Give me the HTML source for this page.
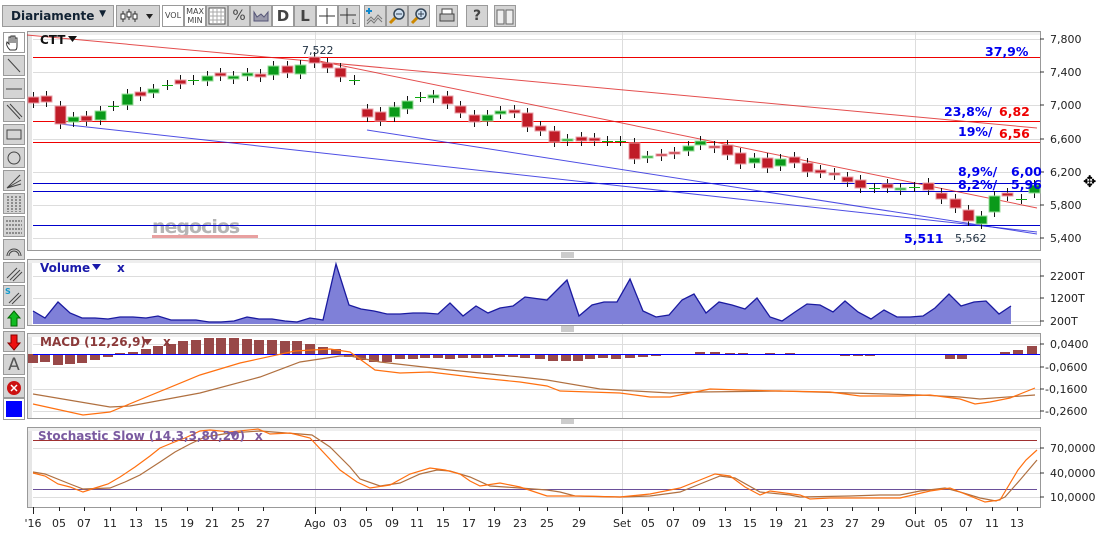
<!DOCTYPE html>
<html><head><meta charset="utf-8"><style>
*{margin:0;padding:0;box-sizing:border-box}
body{width:1097px;height:540px;background:#fff;overflow:hidden;position:relative;font-family:"DejaVu Sans","Liberation Sans",sans-serif}
.b{position:absolute;top:5px;height:22px;background:#d4d4d4;border:1px solid #9a9a9a;font-size:11px;color:#444;text-align:center}
.w{background:#fff}
.t{position:absolute;left:3px;width:22px;height:21px;background:#d4d4d4;border:1px solid #9a9a9a}
</style></head><body>
<div class="b" style="left:2px;width:112px;text-align:left;padding:3px 8px;font-weight:bold;color:#123;font-size:12px;font-family:'DejaVu Sans',sans-serif">Diariamente<span style="position:absolute;right:7px;top:3px;font-size:9px">▼</span></div>
<div class="b" style="left:116px;width:44px"><svg width="42" height="20"><g stroke="#333" fill="#fff"><line x1="6" y1="5" x2="6" y2="16"/><rect x="4" y="8" width="4" height="5"/><line x1="12" y1="3" x2="12" y2="14"/><rect x="10" y="6" width="4" height="5"/><line x1="18" y1="5" x2="18" y2="16"/><rect x="16" y="8" width="4" height="5"/></g><path d="M29 8h7l-3.5 5z" fill="#222"/></svg></div>
<div class="b w" style="left:162px;width:22px;font-size:8px;line-height:20px">VOL</div>
<div class="b w" style="left:184px;width:22px;font-size:8px;line-height:9px;padding-top:1px">MAX<br>MIN</div>
<div class="b" style="left:206px;width:22px"><svg width="20" height="20"><rect x="2" y="2" width="16" height="16" fill="#fff" stroke="#555"/><path d="M6 2v16M10 2v16M14 2v16M2 6h16M2 10h16M2 14h16" stroke="#aaa"/></svg></div>
<div class="b" style="left:228px;width:22px;font-size:14px;line-height:20px">%</div>
<div class="b" style="left:250px;width:22px"><svg width="20" height="20"><path d="M3 15V6l3 5 4-3 3 3 4-5v9z" fill="#99a" stroke="#557"/></svg></div>
<div class="b w" style="left:272px;width:22px;font-size:15px;font-weight:bold;line-height:20px">D</div>
<div class="b" style="left:294px;width:22px;font-size:15px;font-weight:bold;line-height:20px">L</div>
<div class="b w" style="left:316px;width:22px"><svg width="20" height="20"><path d="M10 2v16M2 10h16" stroke="#333"/></svg></div>
<div class="b" style="left:338px;width:22px"><svg width="20" height="20"><path d="M8 2v16M1 9h16" stroke="#333"/><text x="13" y="18" font-size="7" fill="#333">L</text></svg></div>
<div class="b" style="left:364px;width:22px"><svg width="20" height="20"><path d="M2 15l4-4 3 3 4-5 4 4M2 18l4-4 3 3 4-5 4 4" stroke="#777" fill="none"/><path d="M4 2v6M1 5h6" stroke="#18c" stroke-width="2"/></svg></div>
<div class="b" style="left:386px;width:22px"><svg width="20" height="20"><circle cx="12" cy="8" r="5" fill="#cde" stroke="#345" stroke-width="1.5"/><path d="M9 8h6" stroke="#345"/><path d="M8 12l-5 5" stroke="#c80" stroke-width="3"/></svg></div>
<div class="b" style="left:408px;width:22px"><svg width="20" height="20"><circle cx="12" cy="8" r="5" fill="#cde" stroke="#345" stroke-width="1.5"/><path d="M9 8h6M12 5v6" stroke="#345"/><path d="M8 12l-5 5" stroke="#c80" stroke-width="3"/></svg></div>
<div class="b" style="left:436px;width:22px"><svg width="20" height="20"><rect x="5" y="3" width="10" height="5" fill="#fff" stroke="#444"/><rect x="3" y="8" width="14" height="7" fill="#bbb" stroke="#444"/></svg></div>
<div class="b" style="left:466px;width:22px;font-size:14px;font-weight:bold;line-height:20px">?</div>
<div class="b" style="left:494px;width:22px"><svg width="20" height="20"><path d="M2 4h7v14H2zM11 4h7v14h-7z" fill="#eee" stroke="#666"/></svg></div>

<!-- left tools -->
<div class="t w" style="top:32px;background:#fff"><svg width="20" height="19"><path d="M6 17c-3-3-4-6-3-8l2 2V4h2v6V3h2v7V3h2v7V5h2v8c0 3-1 4-2 4z" fill="#fff" stroke="#333"/></svg></div>
<div class="t" style="top:55px"><svg width="20" height="19"><path d="M4 3l12 13" stroke="#444"/></svg></div>
<div class="t" style="top:78px"><svg width="20" height="19"><path d="M2 10h16" stroke="#444"/></svg></div>
<div class="t" style="top:101px"><svg width="20" height="19"><path d="M3 3l13 14M6 2l12 13" stroke="#444"/></svg></div>
<div class="t" style="top:124px"><svg width="20" height="19"><rect x="3" y="5" width="14" height="9" fill="none" stroke="#444"/></svg></div>
<div class="t" style="top:147px"><svg width="20" height="19"><circle cx="10" cy="10" r="6" fill="none" stroke="#444"/></svg></div>
<div class="t" style="top:170px"><svg width="20" height="19"><path d="M3 17L16 4M3 17l14-8M3 17l14-4" stroke="#444"/></svg></div>
<div class="t" style="top:193px"><svg width="20" height="19"><path d="M4 2v16M8 2v16M12 2v16M16 2v16" stroke="#444" stroke-dasharray="2 1"/></svg></div>
<div class="t" style="top:216px"><svg width="20" height="19"><path d="M2 4h16M2 8h16M2 12h16M2 16h16" stroke="#444" stroke-dasharray="2 1"/></svg></div>
<div class="t" style="top:239px"><svg width="20" height="19"><path d="M3 16a7 7 0 0 1 14 0M5 16a5 5 0 0 1 10 0" stroke="#444" fill="none"/></svg></div>
<div class="t" style="top:262px"><svg width="20" height="19"><path d="M3 15L13 5M6 17L16 7M9 18L18 9" stroke="#444"/></svg></div>
<div class="t" style="top:285px"><svg width="20" height="19"><text x="1" y="8" font-size="8" font-weight="bold" fill="#19c">S</text><path d="M5 17L15 7M8 18L17 9" stroke="#444"/></svg></div>
<div class="t" style="top:308px"><svg width="20" height="19"><path d="M10 2l6 7h-3v8H7V9H4z" fill="#1b2" stroke="#060"/></svg></div>
<div class="t" style="top:331px"><svg width="20" height="19"><path d="M10 18l6-7h-3V3H7v8H4z" fill="#e11" stroke="#800"/></svg></div>
<div class="t" style="top:354px;font-size:17px;color:#555;text-align:center">A</div>
<div class="t" style="top:377px"><svg width="20" height="19"><circle cx="10" cy="10" r="7" fill="#c11"/><path d="M7 7l6 6M13 7l-6 6" stroke="#fff" stroke-width="1.5"/></svg></div>
<div class="t" style="top:398px;height:22px;background:#fff"><div style="margin:2px;width:16px;height:16px;background:#00f"></div></div>

<svg id="c" width="1097" height="540" style="position:absolute;left:0;top:0" font-family="DejaVu Sans,sans-serif"></svg>
<div style="position:absolute;left:1083px;top:172px;font-size:16px">✥</div>
<script>
var s='';function a(x){s+=x}
function panel(y1,y2){a('<rect x="27.5" y="'+(y1+.5)+'" width="1013" height="'+(y2-y1)+'" fill="#fff" stroke="#999"/><rect x="28" y="'+(y1+1)+'" width="4" height="'+(y2-y1-1)+'" fill="#e6e6e6"/><rect x="28" y="'+(y1+1)+'" width="1012" height="3" fill="#eee"/>');}
panel(31,250);panel(259,325);panel(333,418);panel(427,507);
// grips
[255,329,421].forEach(function(y){a('<path d="M561 '+(y-2)+'h13M561 '+y+'h13M561 '+(y+2)+'h13" stroke="#999"/>')});
function hl(y,c,x1,x2){a('<line x1="'+(x1||33)+'" x2="'+(x2||1040)+'" y1="'+y+'" y2="'+y+'" stroke="'+c+'"/>')}
function vl(x,y1,y2){a('<line x1="'+x+'" x2="'+x+'" y1="'+y1+'" y2="'+y2+'" stroke="#ddd"/>')}
// main grid
[39,72,105,139,172,205,238].forEach(function(y){hl(y+.5,'#ddd')});
[315,622,915].forEach(function(x){vl(x+.5,32,250);vl(x+.5,260,325);vl(x+.5,334,418);vl(x+.5,428,507)});
var lab=[['7,800',39],['7,400',72],['7,000',105],['6,600',139],['6,200',172],['5,800',205],['5,400',238]];
lab.forEach(function(l){a('<line x1="1040" x2="1044" y1="'+l[1]+'" y2="'+l[1]+'" stroke="#333"/><text x="1050" y="'+(l[1]+4)+'" font-size="11" fill="#222">'+l[0]+'</text>')});
// watermark
a('<text x="152" y="233" font-size="19" font-weight="bold" fill="#b5b5b5" letter-spacing="-1">negocios</text><rect x="152" y="235" width="106" height="3" fill="#e8a0a0"/>');
hl(57.5,'#e00');hl(121.5,'#e00');hl(142.5,'#e00');hl(183.5,'#00c');hl(191.5,'#00c');hl(225.5,'#00c');
a('<line x1="27" y1="35" x2="1037" y2="128" stroke="#d22" stroke-opacity=".8"/><line x1="314" y1="60" x2="1037" y2="208" stroke="#d22" stroke-opacity=".8"/>');
a('<line x1="60" y1="124" x2="1037" y2="232" stroke="#22d" stroke-opacity=".8"/><line x1="367" y1="130" x2="1037" y2="234" stroke="#22d" stroke-opacity=".8"/>');
var C=[[33,97,103,'r'],[46,96,102,'r'],[60,106,124,'r'],[73,117,122,'g'],[86,116,121,'r'],[100,111,120,'g'],[113,106,106,'x'],[127,94,105,'g'],[140,92,96,'r'],[153,89,93,'g'],[167,85,85,'x'],[180,80,84,'r'],[193,80,80,'x'],[207,76,81,'g'],[220,73,76,'r'],[233,76,79,'g'],[247,73,76,'g'],[260,74,77,'r'],[273,66,75,'g'],[287,66,73,'r'],[300,65,74,'g'],[314,57,63,'r'],[327,63,68,'r'],[340,68,77,'r'],[354,80,80,'x'],[367,109,117,'r'],[380,112,121,'r'],[394,107,117,'g'],[407,101,109,'g'],[420,97,97,'x'],[433,95,98,'g'],[447,96,104,'r'],[460,106,113,'r'],[474,115,122,'r'],[487,115,121,'g'],[500,111,114,'g'],[514,110,113,'r'],[527,113,127,'r'],[540,126,131,'r'],[554,131,142,'r'],[567,139,141,'g'],[581,137,141,'r'],[594,138,141,'r'],[607,141,141,'x'],[620,141,141,'x'],[634,143,159,'r'],[647,156,158,'g'],[661,154,156,'r'],[674,152,154,'r'],[688,146,151,'g'],[700,141,145,'g'],[714,146,148,'r'],[727,145,155,'r'],[740,153,164,'r'],[754,158,163,'g'],[767,158,168,'r'],[780,159,166,'g'],[794,157,163,'r'],[807,163,172,'r'],[820,170,173,'r'],[834,173,175,'r'],[847,177,182,'r'],[860,180,188,'r'],[874,188,188,'x'],[887,184,188,'r'],[900,188,190,'g'],[914,187,187,'x'],[928,183,190,'r'],[941,193,199,'r'],[955,199,208,'r'],[968,210,221,'r'],[981,216,224,'g'],[994,196,212,'g'],[1007,193,196,'r'],[1021,199,199,'x'],[1034,185,193,'g']];
C.forEach(function(c){var x=c[0],t=c[1],b=c[2];a('<line x1="'+(x+.5)+'" x2="'+(x+.5)+'" y1="'+(t-5)+'" y2="'+(b+5)+'" stroke="#111"/>');
if(c[3]=='x')a('<line x1="'+(x-5)+'" x2="'+(x+6)+'" y1="'+(t+.5)+'" y2="'+(t+.5)+'" stroke="#1a1"/>');
else a('<rect x="'+(x-5)+'" y="'+t+'" width="11" height="'+Math.max(2,b-t)+'" fill="'+(c[3]=='r'?'#c01c28':'#0a9a1a')+'" stroke="'+(c[3]=='r'?'#e8a0a8':'#9d9')+'"/>')});
a('<text x="40" y="44" font-size="12" font-weight="bold" fill="#111">CTT</text><path d="M68 36h9l-4.5 6z" fill="#111"/>');
a('<text x="302" y="54" font-size="11" fill="#234">7,522</text><text x="955" y="242" font-size="11" fill="#234">5,562</text>');
var B='font-size="12.5" font-weight="bold"';
a('<text x="985" y="56" '+B+' fill="#00e">37,9%</text><text x="944" y="116" '+B+' fill="#00e">23,8%/</text><text x="999" y="116" '+B+' fill="#e00">6,82</text><text x="958" y="136" '+B+' fill="#00e">19%/</text><text x="999" y="138" '+B+' fill="#e00">6,56</text><text x="958" y="176" '+B+' fill="#00e">8,9%/</text><text x="1011" y="176" '+B+' fill="#00e">6,00</text><text x="958" y="189" '+B+' fill="#00e">8,2%/</text><text x="1011" y="189" '+B+' fill="#00e">5,96</text><text x="904" y="243" '+B+' fill="#00e">5,511</text>');
// volume
[276,298,321].forEach(function(y){hl(y+.5,'#ddd')});
var V=[[33,311],[45,318],[58,302],[70,313],[82,318],[95,318],[108,319],[120,317],[133,317],[146,318],[158,316],[171,320],[183,320],[196,320],[209,322],[221,322],[234,321],[247,317],[259,319],[272,319],[285,321],[297,322],[310,318],[323,320],[336,264],[349,305],[361,309],[374,311],[387,314],[400,314],[413,313],[425,313],[438,314],[450,303],[463,316],[476,306],[488,313],[500,308],[513,306],[525,297],[547,300],[567,280],[579,316],[592,305],[604,302],[617,302],[630,279],[643,311],[656,317],[669,315],[682,300],[694,294],[706,313],[719,302],[732,305],[745,309],[757,298],[770,317],[782,321],[795,312],[807,304],[820,305],[833,312],[845,301],[858,312],[871,319],[884,310],[897,317],[910,317],[923,316],[935,308],[949,294],[961,306],[974,302],[986,301],[999,314],[1011,306]];
var p=V.map(function(v){return v.join(',')}).join(' ');
a('<polygon points="33,324 '+p+' 1011,324" fill="#7f80d8"/><polyline points="'+p+'" fill="none" stroke="#1a1aa0" stroke-width="1.3"/>');
a('<text x="40" y="272" font-size="12" font-weight="bold" fill="#1a1aaa">Volume</text><path d="M92 264h9l-4.5 6z" fill="#1a1aaa"/><text x="117" y="272" font-size="12" font-weight="bold" fill="#1a1aaa">x</text>');
[['2200T',276],['1200T',298],['200T',321]].forEach(function(l){a('<line x1="1040" x2="1044" y1="'+l[1]+'" y2="'+l[1]+'" stroke="#333"/><text x="1050" y="'+(l[1]+4)+'" font-size="11" fill="#222">'+l[0]+'</text>')});
// MACD
[344,367,389,411].forEach(function(y){hl(y+.5,'#ddd')});
var H={33:-9,45:-8,58:-11,70:-10,82:-9,95:-6,108:-3,120:1,133:2,146:5,158:8,171:10,183:13,196:14,209:16,221:16,234:16,247:15,259:14,272:14,285:13,297:13,310:10,323:7,336:5,349:-3,361:-6,374:-8,387:-8,400:-5,413:-5,425:-4,438:-4,450:-5,463:-4,476:-4,488:-4,500:-3,513:-3,525:-4,540:-5,553:-7,566:-7,578:-7,590:-5,603:-4,616:-5,630:-4,643:-3,656:-2,669:-1,681:-1,700:2,715:2,730:1,743:1,770:1,790:1,830:-1,845:-2,858:-2,870:-2,885:-1,935:-1,950:-5,962:-5,1005:2,1018:4,1032:8};
for(var k in H){var h=H[k],x=+k;a('<rect x="'+(x-5)+'" y="'+(h>0?354-h:354)+'" width="10" height="'+Math.abs(h)+'" fill="#984848"/>')}
hl(354.5,'#00f');
var O=[[33,404],[83,415],[110,412],[200,375],[240,363],[295,351],[330,349],[350,352],[375,370],[400,373],[430,372],[480,378],[520,382],[547,386],[560,391],[620,393],[650,397],[670,397],[695,392],[710,389],[740,390],[780,391],[830,392],[860,396],[900,396],[930,395],[960,399],[975,404],[990,402],[1010,398],[1035,388]];
var Br=[[33,394],[110,407],[130,406],[200,393],[260,377],[300,362],[340,356],[350,356],[380,362],[450,370],[520,377],[547,380],[600,389],[670,393],[700,392],[780,391],[850,393],[920,395],[960,397],[980,399],[1035,395]];
function pl(P,c){a('<polyline points="'+P.map(function(v){return v.join(',')}).join(' ')+'" fill="none" stroke="'+c+'" stroke-width="1.2"/>')}
pl(Br,'#b07040');pl(O,'#ff7010');
a('<text x="40" y="346" font-size="12" font-weight="bold" fill="#8b3a3a">MACD (12,26,9)</text><path d="M143 339h9l-4.5 6z" fill="#8b3a3a"/><text x="163" y="346" font-size="12" font-weight="bold" fill="#8b3a3a">x</text>');
[['0,0400',344],['-0,0600',367],['-0,1600',389],['-0,2600',411]].forEach(function(l){a('<line x1="1040" x2="1044" y1="'+l[1]+'" y2="'+l[1]+'" stroke="#333"/><text x="'+(l[0][0]=='-'?1045:1050)+'" y="'+(l[1]+4)+'" font-size="11" fill="#222">'+l[0]+'</text>')});
// stoch
[448,473,497].forEach(function(y){hl(y+.5,'#ddd')});
hl(440.5,'#a03030',33,1037);hl(489.5,'#6a4f9a',33,1037);
var SO=[[33,473],[45,476],[58,484],[70,487],[83,492],[95,488],[108,484],[120,477],[135,467],[150,456],[160,448],[172,443],[185,438],[200,431],[210,430],[230,432],[258,429],[270,434],[290,433],[310,438],[340,470],[357,482],[370,488],[390,485],[410,474],[430,468],[445,470],[460,474],[470,481],[480,486],[500,483],[510,485],[520,487],[547,496],[580,496],[620,497],[650,494],[680,488],[700,480],[715,474],[730,476],[745,487],[760,495],[770,491],[800,495],[810,499],[830,498],[870,498],[900,498],[930,491],[950,488],[960,492],[985,502],[1000,500],[1018,470],[1026,460],[1037,450]];
var SB=[[33,472],[45,474],[70,484],[83,489],[110,488],[125,482],[140,475],[160,462],[175,452],[190,444],[205,437],[230,433],[260,431],[300,434],[312,435],[330,447],[350,467],[360,479],[380,486],[400,483],[420,474],[437,470],[450,471],[470,477],[490,486],[520,488],[547,490],[560,492],[575,496],[620,497],[650,496],[680,492],[700,484],[720,476],[735,478],[760,492],[790,495],[800,497],[850,496],[880,495],[900,495],[920,491],[945,488],[960,492],[980,498],[996,501],[1005,497],[1020,480],[1037,460]];
pl(SB,'#b07040');pl(SO,'#ff7010');
a('<text x="38" y="440" font-size="12" font-weight="bold" fill="#7a5aa0">Stochastic Slow (14,3,3,80,20)</text><path d="M229 432h9l-4.5 6z" fill="#7a5aa0"/><text x="255" y="440" font-size="12" font-weight="bold" fill="#7a5aa0">x</text>');
[['70,0000',448],['40,0000',473],['10,0000',497]].forEach(function(l){a('<line x1="1040" x2="1044" y1="'+l[1]+'" y2="'+l[1]+'" stroke="#333"/><text x="1050" y="'+(l[1]+4)+'" font-size="11" fill="#222">'+l[0]+'</text>')});
// x axis
var X=[["'16",33],['05',59],['07',84],['11',110],['13',136],['15',161],['19',187],['21',212],['25',238],['27',263],['Ago',315],['03',340],['05',366],['09',392],['11',417],['15',443],['17',469],['19',494],['23',520],['25',547],['29',579],['Set',622],['05',648],['07',673],['09',699],['13',725],['15',750],['19',776],['21',801],['23',827],['27',852],['29',878],['Out',915],['05',941],['07',966],['11',992],['13',1017]];
X.forEach(function(l){var big=l[0].length==3&&l[0][0]!="'";a('<line x1="'+(l[1]+.5)+'" x2="'+(l[1]+.5)+'" y1="507" y2="'+(big||l[0]=="'16"?514:511)+'" stroke="#222"/><text x="'+l[1]+'" y="527" font-size="11" fill="#222" text-anchor="middle">'+l[0]+'</text>')});
document.getElementById('c').innerHTML=s;
</script>
</body></html>
